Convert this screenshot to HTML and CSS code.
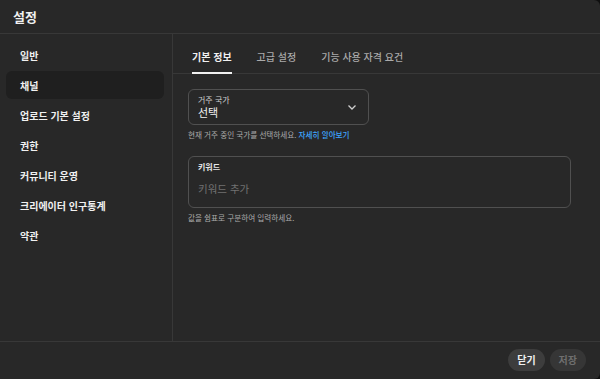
FILE: index.html
```html
<!DOCTYPE html>
<html lang="ko">
<head>
    <meta charset="UTF-8">
    <meta name="viewport" content="width=device-width, initial-scale=1.0">
    <title>설정</title>
    <link rel="stylesheet" href="styles.css">
</head>
<body>
    <div class="dialog">
        <header class="dialog-header">설정</header>
        <div class="dialog-body">
            <nav class="sidebar">
                <a class="nav-item">일반</a>
                <a class="nav-item active">채널</a>
                <a class="nav-item">업로드 기본 설정</a>
                <a class="nav-item">권한</a>
                <a class="nav-item">커뮤니티 운영</a>
                <a class="nav-item">크리에이터 인구통계</a>
                <a class="nav-item">약관</a>
            </nav>
            <main class="content">
                <div class="tabs">
                    <span class="tab active">기본 정보</span>
                    <span class="tab">고급 설정</span>
                    <span class="tab">기능 사용 자격 요건</span>
                </div>
                <div class="form">
                    <div class="field select-field">
                        <div class="field-text">
                            <span class="field-label">거주 국가</span>
                            <span class="field-value">선택</span>
                        </div>
                        <svg class="chevron" width="12" height="12" viewBox="0 0 12 12">
                            <path d="M2.5 4.5 L6 8 L9.5 4.5" fill="none" stroke="#cfcfcf" stroke-width="1.3"/>
                        </svg>
                    </div>
                    <p class="help">현재 거주 중인 국가를 선택하세요. <a class="link">자세히 알아보기</a></p>

                    <div class="field keyword-field">
                        <span class="field-label bold">키워드</span>
                        <span class="placeholder">키워드 추가</span>
                    </div>
                    <p class="help">값을 쉼표로 구분하여 입력하세요.</p>
                </div>
            </main>
        </div>
        <footer class="dialog-footer">
            <button class="btn">닫기</button>
            <button class="btn disabled">저장</button>
        </footer>
    </div>
</body>
</html>
```

FILE: styles.css
```css
html, body {
    margin: 0;
    height: 100%;
    background: #0f0f0f;
}
body {
    font-family: "Noto Sans CJK KR", "Noto Sans", sans-serif;
    color: #f1f1f1;
}
.dialog {
    height: 379px;
    background: #282828;
    border-radius: 0 6px 6px 0;
    display: flex;
    flex-direction: column;
    overflow: hidden;
}
.dialog-header {
    height: 34px;
    box-sizing: border-box;
    padding: 0 13px;
    display: flex;
    align-items: center;
    font-size: 13px;
    font-weight: 700;
    border-bottom: 1px solid #383838;
}
.dialog-body {
    flex: 1;
    display: flex;
    min-height: 0;
}
.sidebar {
    width: 173px;
    box-sizing: border-box;
    padding: 7px 8px 0 6px;
    border-right: 1px solid #383838;
    display: flex;
    flex-direction: column;
    gap: 2px;
}
.nav-item {
    height: 28px;
    padding-left: 14px;
    display: flex;
    align-items: center;
    font-size: 10px;
    font-weight: 700;
    border-radius: 6px;
    color: #f1f1f1;
}
.nav-item.active {
    background: #1f1f1f;
}
.content {
    flex: 1;
    display: flex;
    flex-direction: column;
}
.tabs {
    height: 40px;
    box-sizing: border-box;
    padding: 0 0 0 19px;
    display: flex;
    gap: 25px;
    border-bottom: 1px solid #383838;
}
.tab {
    font-size: 10px;
    font-weight: 500;
    color: #aaaaaa;
    display: flex;
    align-items: center;
    padding-top: 7px;
    border-bottom: 2px solid transparent;
    margin-bottom: -1px;
}
.tab.active {
    color: #f1f1f1;
    font-weight: 700;
    border-bottom-color: #f1f1f1;
}
.form {
    padding: 15px 29px 0 15px;
}
.field {
    border: 1px solid #505050;
    border-radius: 6px;
    box-sizing: border-box;
}
.select-field {
    width: 181px;
    height: 36px;
    padding: 0 10px 0 9px;
    display: flex;
    align-items: center;
    justify-content: space-between;
}
.field-text {
    display: flex;
    flex-direction: column;
}
.field-label {
    font-size: 8px;
    color: #cfcfcf;
    line-height: 11px;
}
.field-label.bold {
    font-weight: 700;
    color: #e8e8e8;
}
.field-value {
    font-size: 11px;
    line-height: 15px;
    color: #f1f1f1;
}
.help {
    margin: 4px 0 0;
    font-size: 7.6px;
    line-height: 11px;
    color: #aaaaaa;
}
.link {
    color: #3ea6ff;
    font-weight: 500;
}
.keyword-field {
    margin-top: 16px;
    height: 52px;
    padding: 4px 9px 0;
    display: flex;
    flex-direction: column;
}
.placeholder {
    margin-top: 9px;
    font-size: 10.5px;
    color: #717171;
}
.dialog-footer {
    height: 38px;
    box-sizing: border-box;
    border-top: 1px solid #383838;
    display: flex;
    justify-content: flex-end;
    align-items: center;
    gap: 5px;
    padding: 0 14px 2px 0;
}
.btn {
    height: 22px;
    padding: 0 9px;
    border: none;
    border-radius: 11px;
    background: #3d3d3d;
    color: #f1f1f1;
    font-family: inherit;
    font-size: 10px;
    font-weight: 700;
}
.btn.disabled {
    color: #6f6f6f;
    background: #363636;
}
```
